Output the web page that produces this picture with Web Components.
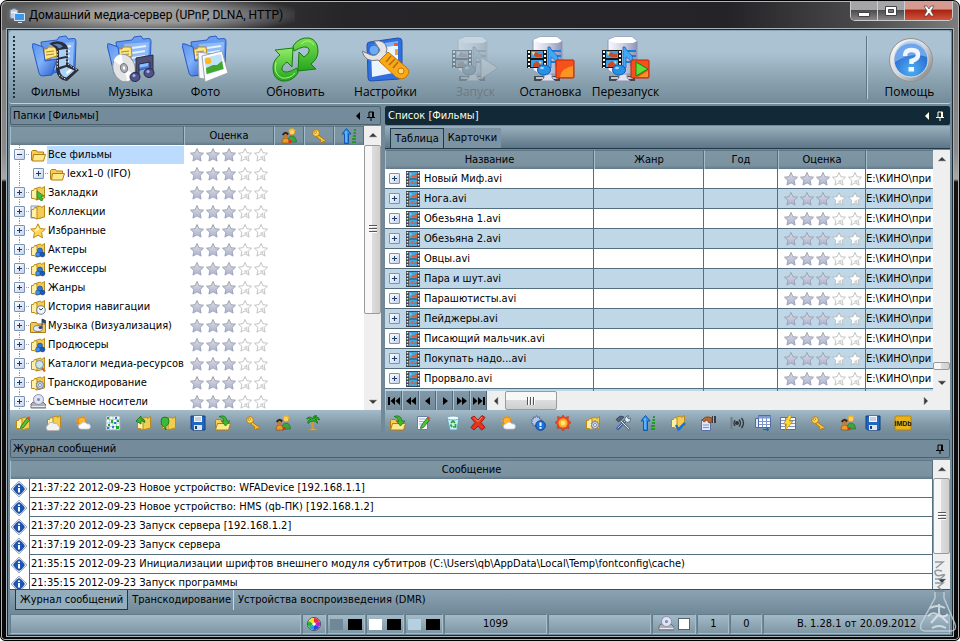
<!DOCTYPE html>
<html lang="ru">
<head>
<meta charset="utf-8">
<title>Домашний медиа-сервер (UPnP, DLNA, HTTP)</title>
<style>
html,body{margin:0;height:100%;overflow:hidden;background:#fff}
body{font:11px/14px "DejaVu Sans Condensed","DejaVu Sans",sans-serif;color:#000}
</style>
</head>
<body>
<media-window caption="Домашний медиа-сервер (UPnP, DLNA, HTTP)"></media-window>
<script>
const leaf = `<path d="M5.5 3.500l5-1.500 1 1.500 3-2v11.500l-8 2z" fill="#f3cd52" stroke="#b98a1b"/><path d="M1.500 5.500h2l1-2 2.500.500V15l-3-1.500H1.500z" fill="#fff0a8" stroke="#b98a1b"/>`;
const openFolder = `<path d="M1.500 13.500v-9l1-1h4l1 1.500h6v3" fill="#f5cf56" stroke="#b07d13"/><path d="M3.500 7.500h12l-2 6.500h-11z" fill="#ffe88a" stroke="#b07d13"/>`;
const folk = `<circle cx="10" cy="8.500" r="2.500" fill="#2a7be0" stroke="#123f90" stroke-width=".6"/><circle cx="8" cy="12.500" r="2.400" fill="#3f93f0" stroke="#123f90" stroke-width=".6"/><circle cx="12.500" cy="12.500" r="2.400" fill="#1658bd" stroke="#123f90" stroke-width=".6"/>`;
const gearPath = `M8 2l1 2 2-.700 0 2.100 2.200.600-1.200 1.800 1.500 1.700-2.200.800.100 2.200-2.100-.600L8 13.800l-1.300-1.900-2.100.600.100-2.200-2.200-.800L4 7.800 2.800 6l2.200-.600V3.300L7 4z`;
const note = `<path d="M2.500 1.500h10v13h-10z" fill="#f6f9ff" stroke="#6880a8"/><path d="M4 4h6M4 6.500h6M4 9h4" stroke="#9db0cf"/>`;
const pencil = `<path d="M6 11l6-8 2.500 2-6 7.500L5.500 13.500z" fill="#53c437" stroke="#256a18" stroke-width=".8"/><path d="M12 3l1.500-1.500 2 1.500-1.200 2z" fill="#e3493b"/>`;
const keyArt = `<g stroke="#b06f00" stroke-width=".8"><path d="M6.500 6.500l8 6-1 1.500-1.500-.800-1 1.800-1.600-1.100.600-1.700-4-3z" fill="#f9c63a"/><circle cx="5" cy="5" r="3.400" fill="#ffd75a"/><circle cx="4.300" cy="4.200" r="1.200" fill="#fff6c8"/></g>`;
const server = (extra) => `<defs><linearGradient id="sg"><stop stop-color="#fbfbff"/><stop offset=".5" stop-color="#cfd2e4"/><stop offset="1" stop-color="#8d93b8"/></linearGradient></defs>
<path d="M7 41h26v5H7z" fill="#42484e"/><path d="M9 42h7v2H9zM25 42h6v2h-6z" fill="#c3c8cc"/><path d="M17 36h8v7l3 3H14l3-3z" fill="#e0e3ee" stroke="#8d93b0"/>
<path d="M6 5l7-3h17l5 4v29l-6 4H12l-6-4z" fill="url(#sg)" stroke="#8f95b4"/><path d="M6 5l7 3h18l4-2-5-4H13z" fill="#fff"/><path d="M21 16h13M21 21h13M22 27h12" stroke="#1f79d6" stroke-width="2"/>
<path d="M0 15h20v18H0z" fill="#181818"/><path d="M4 16h12v7H4zM4 25h12v7H4z" fill="#3aa0e8"/><path d="M6 20l3-3 3 2 3 0v3H9zM6 29l4-3 4 4v2H6z" fill="#c94a28"/><path d="M5 17l3 0-2 4zM12 26l3 1-2 2z" fill="#f2d9a0"/><path d="M2 16v17M18 16v17" stroke="#fff" stroke-width="2" stroke-dasharray="2 2"/>
<path d="M23 12c2 6 8 6 8 13 0 3-2 4-2 6 1-7-4-8-5-9v11h-3V12z" fill="#40a8f6" stroke="#1664b4" stroke-width=".8"/><ellipse cx="17" cy="35" rx="6.500" ry="5" fill="#2492ea" stroke="#145ca8"/><ellipse cx="15" cy="33" rx="2" ry="1.200" fill="#9fd4fb"/>${extra}`;
const bigFolder = `<defs><linearGradient id="bf" x2="1" y2="1"><stop stop-color="#5791ee"/><stop offset=".45" stop-color="#83b3fa"/><stop offset="1" stop-color="#2458cb"/></linearGradient><linearGradient id="bb" x2="0" y2="1"><stop stop-color="#6ea2f3"/><stop offset="1" stop-color="#3a72dd"/></linearGradient></defs>
<path d="M9 7l16-2 2-3 7-1 2 3 6-.500q2 0 2 3l-1 26-31 8z" fill="url(#bb)" stroke="#2c5cc6"/>
<path d="M17 9l25-2-1 24-20 4z" fill="#8fbcf8"/><path d="M25 13l14-2M25 18l13-2M25 23l13-2M25 28l12-2" stroke="#e2f0ff" stroke-width="2"/>
<path d="M12 14h3l1-2h8l1 9-13 4z" fill="#ffe680" stroke="#b88a1b"/><path d="M14 17l8-1M14 20l8-1" stroke="#a98735"/>
<path d="M0 10q0-2 3-1l8 3 2 14 12-2-5 16-10 1q-2 0-3-3z" fill="url(#bf)" stroke="#2858c0"/>`;
const starPath = `M8 1.500l1.900 4.200 4.600.500-3.400 3.200 1 4.700L8 11.800l-4.100 2.300 1-4.700L1.500 6.200l4.600-.500z`;
const star16 = (on) => on
 ? `<path d="${starPath}" fill="url(#on)" stroke="#9ea3b6"/>`
 : `<path d="${starPath}" fill="#fff" stroke="#b4b4b4" stroke-width=".8"/><path d="M6.500 10.300l4.500-2-1 1.200.700 3L8 11z" fill="#d4d4d4"/>`;
const palette = `<circle cx="8" cy="8" r="7.500" fill="#eee" stroke="#445"/><path d="M8 8V1a7 7 0 0 1 6 3.500z" fill="#f02a2a"/><path d="M8 8l6-3.500a7 7 0 0 1 0 7z" fill="#c420c8"/><path d="M8 8l6 3.500A7 7 0 0 1 8 15z" fill="#2447e8"/><path d="M8 8v7a7 7 0 0 1-6-3.500z" fill="#18a8c8"/><path d="M8 8l-6 3.500a7 7 0 0 1 0-7z" fill="#26b62c"/><path d="M8 8L2 4.500A7 7 0 0 1 8 1z" fill="#f6dd1a"/><circle cx="8" cy="8" r="2" fill="#fff"/>`;
const turnArrow = `<path d="M3 15L21 13L20 32L15 27Q9 31 10 35Q13 40 25 33L26 38Q20 47 10 46Q1 44 1 33Q1 25 8 20z"/>`;

const ICONS = {
 app:[16,`<path d="M1 3q4-3 8 0v8q-4 2-8 0z" fill="#c3cede" stroke="#6c8098"/><path d="M2 5q3 1 6 0" stroke="#fff" fill="none"/><path d="M5.500 6.500h10v7h-10z" fill="#3d97e8" stroke="#cfe4f8"/><path d="M9 15.500h4" stroke="#dde"/>`],
 open:[16,openFolder],
 bookmark:[16,leaf+`<path d="M7 6l7 5-3 .500 2 3.500-2 1-2-3.500-2 2z" fill="#3cc038" stroke="#1b7e1b" stroke-width=".7"/>`],
 collection:[16,`<path d="M1 2h8l2 2v10H1z" fill="#e8edf5" stroke="#8b95a8"/>`+leaf],
 star:[16,`<path d="M8 .800l2.200 4.700 5.100.600-3.800 3.500 1 5.200L8 12.200l-4.500 2.600 1-5.200L.700 6.100l5.100-.600z" fill="#ffd654" stroke="#c08a16"/><path d="M8 3l1.500 3.500L5 9l.500-2.500z" fill="#fff3b8"/>`],
 folk:[16,leaf+folk],
 clock:[16,leaf+`<circle cx="11" cy="11" r="4.300" fill="#eef6ff" stroke="#6d7f95"/><path d="M9 9.500l2 1.500 2-2" stroke="#345" fill="none"/>`],
 music:[16,`<path d="M.500 14.500v-9l1-1h5l1 1.500h8v8.500z" fill="#f0ca55" stroke="#ab7b14"/><ellipse cx="8" cy="10.500" rx="4.500" ry="3" fill="#e5eaf6" stroke="#78829e"/><path d="M12 9V1l3.500 1.500v3L12.500 4" fill="#3a4470" stroke="#2a3158" stroke-width=".8"/><ellipse cx="10.500" cy="9.500" rx="2" ry="1.500" fill="#3a4470"/>`],
 search:[16,leaf+`<circle cx="9.500" cy="8.500" r="4" fill="#cbe8fb" fill-opacity=".9" stroke="#6f8fae"/><path d="M12 12l3 3.500" stroke="#d9582c" stroke-width="2"/>`],
 gear:[16,leaf+`<g transform="translate(4 4) scale(.75)"><path d="${gearPath}" fill="#c9d4e8" stroke="#66769a"/><circle cx="8" cy="8" r="2" fill="#fff" stroke="#66769a"/></g>`],
 disc:[16,`<path d="M1 10l2-2h10l3 3v3H1z" fill="#aeb2b8" stroke="#6d7177"/><path d="M1.500 12.500h14" stroke="#e9e9ee"/><ellipse cx="8.500" cy="5.500" rx="5" ry="5" fill="#dfe4f4" stroke="#8991aa"/><circle cx="8.500" cy="5.500" r="1.500" fill="#7b86b0"/>`],
 editfolder:[16,leaf+pencil],
 cloudfolder:[16,`<g transform="translate(1 -1)">${leaf}</g><path d="M3 15.500a3 3 0 0 1 0-5.500 3.500 3.500 0 0 1 6-1.500 3 3 0 0 1 4 2 2.600 2.600 0 0 1 0 5z" fill="#f2f2f2" stroke="#b4b4b4"/>`],
 weather:[16,`<circle cx="7" cy="6" r="4" fill="#ffb629" stroke="#ef7d0e"/><path d="M7 0v2M1 6h2M2.500 2l1.500 1.500M11.500 2L10 3.500M2 10l1.500-1" stroke="#f79a1c" stroke-width="1.500"/><path d="M6 14a2.500 2.500 0 0 1 0-5 3.500 3.500 0 0 1 6 0 2.500 2.500 0 0 1 1.500 5z" fill="#fafafa" stroke="#c5cad2" stroke-width=".7"/>`],
 grid:[16,`<path d="M1 1h14v14H1z" fill="#f4fbff" stroke="#93a9b8"/><path d="M1 4.500h14M1 8h14M1 11.500h14M4.500 1v14M8 1v14M11.500 1v14" stroke="#9fb8c6" stroke-width=".7"/><path d="M2 2h2v2H2zM6 5h2v3H6zM11 11h3v3h-3zM12 5h2v2h-2zM3 9h2v2H3z" fill="#25a533"/><path d="M10 2h2v2h-2zM2 12h2v2H2zM7 11h2v2H7zM9 7h2v2H9z" fill="#3179c8"/>`],
 backfolder:[16,`<g transform="translate(1 0)">${leaf}</g><path d="M1 6l5-5v2.500q4 0 4 4-2-2-4-1.500V9z" fill="#3fb52f" stroke="#1b6d17" stroke-width=".8"/>`],
 addfolder:[16,`<g transform="translate(1 0)">${leaf}</g><path d="M1 6q0-4 4-4t4 4-3 5v4l-2-3q-3-1-3-6z" fill="#3cba3a" stroke="#1b6d17" stroke-width=".8"/>`],
 save:[16,`<path d="M1 1h14v14H2.500L1 13.500z" fill="#2167c0" stroke="#123f82"/><path d="M4 1h8v6H4z" fill="#f4f7fc"/><path d="M5 3h6M5 5h6" stroke="#9aabc5"/><path d="M4 10h8v5H4z" fill="#dfe4ea"/><path d="M5 11h2v3H5z" fill="#123f82"/>`],
 load:[16,`<path d="M.500 14.500v-9l1-1h4l1 1.500h6v3" fill="#f5cf56" stroke="#b07d13"/><path d="M2.500 8.500h13l-2 6.500H.500z" fill="#ffe88a" stroke="#b07d13"/><path d="M4 1.500q7-2.500 8 4.500h3L10.500 11 6.500 6H9Q9 3 4 1.500z" fill="#3cb730" stroke="#17701a" stroke-width=".7"/>`],
 key:[16,keyArt],
 users:[16,`<path d="M7 14q0-6 4-6t4.500 6z" fill="#3ca63d" stroke="#23702a" stroke-width=".7"/><circle cx="11" cy="4" r="3" fill="#ffd06a" stroke="#c98722" stroke-width=".8"/><path d="M8 3q3-4 6 0" stroke="#efb823" stroke-width="1.500" fill="none"/><path d="M1 15q0-5 3.500-5T9 15z" fill="#ef9d22" stroke="#974d0c" stroke-width=".7"/><circle cx="4.500" cy="7.500" r="2.600" fill="#c47a3c"/><path d="M1.800 7q2-4 5.400-.500" stroke="#30241c" stroke-width="2" fill="none"/><path d="M7.500 12l3 0 0 3h-3z" fill="#d82f22"/>`],
 palm:[16,`<path d="M8 6q-1.500 4 0 8" stroke="#d29a2e" stroke-width="2.500" fill="none"/><path d="M8 4Q4 0 1.500 4 4 3 6 4.500 2 5 3 8.500 5 6 8 6q3 0 4.500 2.500.500-3-2.500-4 3-1 4.500.500Q14 1 9.500 3 10 1 12 1 8-.500 8 4z" fill="#35b02d" stroke="#18771b" stroke-width=".9"/><path d="M3 15q5-3 10 0z" fill="#f3cf6c" stroke="#b98a2c" stroke-width=".7"/>`],
 edit:[16,note+pencil],
 recycle:[16,`<path d="M2 3h12l-2 12H5z" fill="#c9ecf9" stroke="#5f9ec0"/><ellipse cx="8" cy="3" rx="6" ry="2" fill="#f5fdff" stroke="#76a9c5"/><path d="M6 8l2-2 2 2M10.500 9l0 3H8M7 12L5.500 9.500" stroke="#22a62c" stroke-width="1.700" fill="none"/>`],
 remove:[16,`<path d="M1 3l3-2 4 4 4-4.500 3 2-4 5 4 5-3.500 2.500L8 11l-4 4-3-2.500 4-5z" fill="#e8341d" stroke="#a8170c"/><path d="M4 2.500l4 4L12 2" stroke="#ff8b6c" fill="none"/>`],
 gearinfo:[16,`<path d="${gearPath}" transform="translate(-1.500 -1.500)" fill="#b6c8e4" stroke="#5f76a2"/><circle cx="10.500" cy="10.500" r="4.800" fill="#1e72dc" stroke="#0e3f96"/><path d="M10.500 7.500v3.500M10.500 12v1.700" stroke="#fff" stroke-width="2"/>`],
 burst:[16,`<path d="M8 0l2 2.500 3.500-1-.500 3.500L16 7.500 13.500 9.500l.500 4-3.500-.500L8 16l-2-3-4 .500.500-4L0 7.500 3 5l-.500-3.500L6 2.500z" fill="#f2471d" stroke="#c02808" stroke-width=".5"/><circle cx="8" cy="8" r="4.500" fill="#ffb32d"/><circle cx="8" cy="8" r="2.300" fill="#ffe67a"/>`],
 tools:[16,`<path d="M2 14.500L11 5" stroke="#3c5a96" stroke-width="3"/><path d="M2.500 13.500l8-8" stroke="#b4caec"/><path d="M9.500 5l1-3 3-1.500-1 2.500 1.500 1 2-1-1 3.500-3 1z" fill="#e8edf4" stroke="#4b5a74" stroke-width=".8"/><path d="M14.500 14.500L6 6" stroke="#5f6f88" stroke-width="2.600"/><path d="M14 14L6 6" stroke="#dfe6ef"/><path d="M1 4.500L5 1l4 1-5.500 5z" fill="#52637c" stroke="#28364c" stroke-width=".7"/>`],
 sort:[16,`<path d="M5.500.500L10 6H7.500v9.500h-4V6H1z" fill="#2f93ee" stroke="#0f58ac"/><path d="M5 3v11" stroke="#96cdfd"/><path d="M11 14h4M11 11h4M12 8h3M12.500 5H15M13 2h2" stroke="#24992a" stroke-width="2"/>`],
 check:[16,`<g transform="translate(0 -1)">${leaf}</g><path d="M6 10l2.500 4.500L15 8" stroke="#1b6fd6" stroke-width="2.500" fill="none"/>`],
 card:[16,`<path d="M1.500 4.500h9v11h-9z" fill="#dbe6fa" stroke="#5c70a8"/><path d="M3 10h6M3 12.500h6" stroke="#7c94cc"/><path d="M2 5q3-4 7-3l3 1v4L9 8 7 5 4 7z" fill="#b8662c" stroke="#6b3614" stroke-width=".7"/><path d="M12 1h4v7h-4z" fill="#3a3d42"/><path d="M13.500 1v7" stroke="#aaa"/>`],
 sound:[16,`<path d="M1.500 2v12" stroke="#6f7d88" stroke-width="2"/><circle cx="7" cy="8" r="2" fill="#333"/><path d="M9 4.500q3 3.500 0 7M11.500 3q4 5 0 10M5 5q-2 3 0 6" stroke="#30363c" stroke-width="1.300" fill="none"/>`],
 table:[16,`<path d="M3.500.500h12v12h-12z" fill="#fff" stroke="#4f6ba6"/><path d="M3.500 1h12v2.500h-12z" fill="#7e9bd6"/><path d="M7.500 1v11M11.500 1v11M4 6.500h11M4 9.500h11" stroke="#7d95c8"/><path d="M.500 3.500h3v9h-3z" fill="#dfe7f8" stroke="#4f6ba6"/><path d="M8 14.500h5M11 12.500l3 2-3 2" stroke="#1763c8" fill="none"/>`],
 tablebolt:[16,`<path d="M.500 2.500h15v12H.500z" fill="#f3f6fc" stroke="#5b6f9c"/><path d="M1 5.500h14M1 8.500h14M1 11.500h14M5.500 3v11" stroke="#7f90b4"/><path d="M9 0L3.500 9h3L5 15.500 13 6H9.500L12 0z" fill="#ffd935" stroke="#b07e0a" stroke-width=".7"/>`],
 imdb:[18,`<rect x="1" y="2" width="16" height="14" rx="1" fill="#e8b21a" stroke="#b98406"/><text x="9" y="12" font-family="Liberation Sans Narrow, Liberation Sans, sans-serif" font-weight="700" font-size="7" text-anchor="middle" fill="#111">IMDb</text>`],
 info:[16,`<path d="M8 0l8 8-8 8-8-8z" fill="#d8e2f1" stroke="#8c9cb8" stroke-width=".8"/><path d="M8 2.500q3 1 5.500 5.500Q11 12.500 8 13.500 5 12.500 2.500 8 5 3.500 8 2.500z" fill="#1c56b4" stroke="#0d3888" stroke-width=".6"/><path d="M8 4.500v1.500M8 7v4.500" stroke="#fff" stroke-width="2"/>`],
 film:[16,`<path d="M1 0h14v16H1z" fill="#3b434d"/><path d="M4 1h8v6.500H4zM4 8.500h8V15H4z" fill="#49a4dc"/><path d="M8 4l1.500.500L11 2l1 1v3.500H6zM5 12l3-2 1 2 3-1v2H8z" fill="#d4633a"/><path d="M5 2l2 1-2 2z" fill="#86cdf2"/><path d="M2.500 1v15M13.500 1v15" stroke="#eceff2" stroke-width="1.500" stroke-dasharray="1.500 1.500"/>`],
 palette:[16,palette],
 pin:[10,`<path d="M3 1h4.500v5M3 1v5M6.500 1v5M1 6.500h8M5 6.500V10" stroke="currentColor" fill="none"/>`],
 back:[8,`<path d="M6 0v8L2 4z" fill="currentColor"/>`],
 films:[48,bigFolder+`<path d="M17 9Q22 5 30 7Q37 9 36 18L36 28L47 35L35 46Q25 45 24 34L25 18Q25 12 17 9z" fill="#2c2d3a"/><path d="M21 9.500q7-2 10 2l-4 2q-2-3-6-4z" fill="#5c80b8"/><path d="M27 15l7-1v7l-7 1.500zM27 24.500l7-1.500v7l-7 2zM27.500 34.500l7-2.500 8 3.500-8 7q-6-1-7-8z" fill="#a9d2f7"/><path d="M25.300 16v18M35 14v15" stroke="#e4e6ee" stroke-dasharray="1.500 1.500"/><path d="M36 29l9 6M27 40l7 4.500" stroke="#e4e6ee" stroke-dasharray="1.500 1.500"/><path d="M34 37l4-3 2 1-5 5z" fill="#fff"/>`],
 sounds:[48,bigFolder+`<g transform="rotate(-15 17 33)"><ellipse cx="17" cy="33" rx="11" ry="14" fill="#e2e3e5" stroke="#95989e"/><path d="M17 33L9 23q4-5 9-4zM17 33l8 9q-3 4-8 5z" fill="#fff"/><ellipse cx="17" cy="33" rx="3.500" ry="4.500" fill="#a9adb8" stroke="#777"/><ellipse cx="17" cy="33" rx="1.200" ry="1.700" fill="#fff"/></g><path d="M29 41V23l17-3v18h-3V27l-11 2v12z" fill="#4e5175" stroke="#2a2c48"/><ellipse cx="28" cy="42" rx="5" ry="4.500" fill="#4e5488" stroke="#25284a"/><ellipse cx="42" cy="38" rx="5" ry="4.500" fill="#4e5488" stroke="#25284a"/><circle cx="27" cy="40.500" r="1.500" fill="#a8b2e8"/><circle cx="41" cy="36.500" r="1.500" fill="#a8b2e8"/>`],
 photos:[48,bigFolder+`<path d="M16 17l15 2-4 26-10-2z" fill="#f6f7fb" stroke="#9aa0b2"/><path d="M20 21l20-5 6 22-23 9z" fill="#fff" stroke="#9ba1b0"/><path d="M22 23l17-4 3 15-17 6z" fill="#bfe2fb"/><path d="M24 33l7-3 4 0 5-4 1.500 8-17 5z" fill="#43a62e"/><circle cx="26" cy="26" r="3.200" fill="#ffb81e"/>`],
 refresh:[48,`<defs><linearGradient id="g" x2="0" y2="1"><stop stop-color="#92ec63"/><stop offset="1" stop-color="#25a51d"/></linearGradient><linearGradient id="h" x2="0" y2="1"><stop stop-color="#25a51d"/><stop offset="1" stop-color="#7be052"/></linearGradient></defs><g stroke="#177c14" stroke-linejoin="round"><g fill="url(#g)">${turnArrow}</g><g fill="url(#h)" transform="rotate(180 23.500 24.500)">${turnArrow}</g><path d="M4 27q-3 12 6 16 8 1 13-5" fill="none" stroke="#a9f283"/><path d="M29 9q8-7 13 1" fill="none" stroke="#a9f283"/></g>`],
 settings:[48,`<path d="M5 10q0-3 3-3L36 3q4 0 4 3v34q0 3-3 4L9 46q-3 0-3-3z" fill="#2f6fe0" stroke="#2350b0"/><path d="M9 14l27-5v28L10 42z" fill="#eaf5ff"/><path d="M9 10l27-4v4L9 15z" fill="#7fb2fa"/><path d="M32 8h4v3h-4z" fill="#e66224"/><path d="M33 14h3v6h-3z" fill="#e8a838"/><circle cx="12" cy="15" r="5" fill="#6cabf5" stroke="#2860c0"/><path d="M18 15L12 6q11-2 13 8l-1 4 6 5-6 8-8-6Q3 28 0 16l9 4q6 2 9-5z" fill="#e4e4e6" stroke="#77787c"/><path d="M17 26l9-9 18 15q5 4 1 9t-11 1z" fill="#f8a915" stroke="#c77408"/><path d="M24 27l5-6M27 30l6-6M31 33l5-6" stroke="#b86a08" stroke-width="1.500"/><circle cx="39" cy="36" r="3" fill="#ffd676" stroke="#c77408"/>`],
 start:[48,server(`<path d="M29 22l17 11-17 11z" fill="#cfd8e0" stroke="#7c8790"/>`)],
 stop:[48,server(`<rect x="29" y="25" width="18" height="18" rx="1" fill="#f6501b" stroke="#c22208"/><path d="M33 42q1-9 13-11v11z" fill="#fb9423"/>`)],
 restart:[48,server(`<rect x="29" y="25" width="18" height="18" rx="1" fill="#f6501b" stroke="#c22208"/><path d="M36 42l10-6v6z" fill="#fb9423"/><path d="M34 27l12 7-12 7z" fill="#5de038" stroke="#1c7e18"/>`)],
 help:[48,`<defs><linearGradient id="r" x2="1" y2="1"><stop stop-color="#fff"/><stop offset=".5" stop-color="#d7d7d9"/><stop offset="1" stop-color="#777"/></linearGradient><radialGradient id="b" cx=".5" cy=".8"><stop stop-color="#4fb0f2"/><stop offset="1" stop-color="#3075d5"/></radialGradient></defs><circle cx="25" cy="25" r="21.500" fill="url(#r)" stroke="#8f9295"/><circle cx="25" cy="25" r="17" fill="url(#b)" stroke="#d3e4f2"/><path d="M9 22a16 16 0 0 1 32 0q-15-6-32 5z" fill="#9ac4f6" opacity=".6"/><path d="M19 21q0-6 6.500-6t6.500 5q0 4-6.500 6v3" fill="none" stroke="#f1f5fc" stroke-width="4.500"/><path d="M22.500 32h5.500v4.500h-5.500z" fill="#f1f5fc"/>`]
};

class UiBase extends HTMLElement {
  connectedCallback(){ if(!this.shadowRoot) this.attachShadow({mode:'open'}).innerHTML = this.render(); }
  render(){ return ''; }
  a(n,d=''){ return this.getAttribute(n) ?? d; }
}

customElements.define('ui-icon', class extends UiBase {
  render(){
    const [box,art] = ICONS[this.a('name')];
    const s = this.a('size', box);
    return `<style>:host{display:inline-block;flex:none;line-height:0}svg{display:block}</style><svg width="${s}" height="${s}" viewBox="0 0 ${box} ${box}" fill="none" aria-hidden="true">${art}</svg>`;
  }
});

customElements.define('star-rating', class extends UiBase {
  render(){
    const n = +this.a('value','3');
    return `<style>:host{display:block}svg{display:block;width:80px;height:16px}</style>
    <svg viewBox="0 0 80 16" role="img" aria-label="${n} из 5"><defs><linearGradient id="on" x2="0" y2="1"><stop stop-color="#e2e2e2"/><stop offset=".45" stop-color="#c9cbd6"/><stop offset="1" stop-color="#aab2e0"/></linearGradient></defs>
    ${[0,1,2,3,4].map(i=>`<g transform="translate(${i*16} 0)">${star16(i<n)}</g>`).join('')}</svg>`;
  }
});

customElements.define('tool-button', class extends UiBase {
  render(){
    return `<style>:host{display:block;width:75px;font:12px/16px "Open Sans","Noto Sans",sans-serif}
    button{all:unset;box-sizing:border-box;display:flex;flex-direction:column;align-items:center;gap:1px;width:100%;padding-top:4px;white-space:nowrap}
    button:disabled{color:#75797d}button:disabled ui-icon{opacity:.32;filter:grayscale(.8)}</style>
    <button type="button" ${this.hasAttribute('disabled')?'disabled':''}><ui-icon name="${this.a('icon')}"></ui-icon><span><slot></slot></span></button>`;
  }
});

customElements.define('main-toolbar', class extends UiBase {
  render(){
    return `<style>:host{display:flex;box-sizing:border-box;height:74px;padding:0 4px 0 2px;background:linear-gradient(#abc2d2 0,#abc2d2 30%,#8ba2b1 68%,#748b9a 100%);border-top:1px solid #8aa3b4;border-bottom:1px solid #b9d3e4;border-radius:3px}
    .grip{width:2px;margin:5px 3px 4px 2px;background:repeating-linear-gradient(#1d3444 0 2px,transparent 2px 4px)}
    .group{display:flex;margin-right:15px}
    .rule{width:1px;margin:5px 0 4px auto;background:#5f7888;border-right:1px solid #b9cddb}.end{margin:0;padding-left:4px}</style>
    <div class="grip"></div>
    <div class="group"><tool-button icon="films">Фильмы</tool-button><tool-button icon="sounds">Музыка</tool-button><tool-button icon="photos">Фото</tool-button></div>
    <div class="group"><tool-button icon="refresh">Обновить</tool-button></div>
    <div class="group"><tool-button icon="settings">Настройки</tool-button></div>
    <div class="group"><tool-button icon="start" disabled>Запуск</tool-button><tool-button icon="stop">Остановка</tool-button><tool-button icon="restart">Перезапуск</tool-button></div>
    <div class="rule"></div><div class="group end"><tool-button icon="help">Помощь</tool-button></div>`;
  }
});

customElements.define('panel-header', class extends UiBase {
  render(){
    return `<style>:host{display:flex;align-items:center;box-sizing:border-box;height:19px;padding:0 3px 0 2px;border:1px solid #4c5f6c;border-radius:2px;background:#738b9a}
    :host([active]){background:#122938;color:#fffce0;border-color:#122938}
    span{flex:1}button{all:unset;width:13px;display:flex;justify-content:center}</style>
    <span><slot></slot></span>${this.hasAttribute('nav')?'<button type="button" aria-label="Назад"><ui-icon name="back"></ui-icon></button>':''}<button type="button" aria-label="Закрепить"><ui-icon name="pin"></ui-icon></button>`;
  }
});

customElements.define('icon-strip', class extends UiBase {
  render(){
    return `<style>:host{display:flex;gap:5px;height:25px;align-items:center;background:linear-gradient(#a3bac9,#8097a6 60%,#6f8796);overflow:hidden}
    div{display:flex}button{all:unset;width:25px;height:25px;display:flex;align-items:center;justify-content:center}</style>
    ${this.a('icons').split('|').map(g=>`<div>${g.split(' ').map(n=>`<button type="button" aria-label="${n}"><ui-icon name="${n}"></ui-icon></button>`).join('')}</div>`).join('')}`;
  }
});

customElements.define('scroll-bar', class extends UiBase {
  render(){
    const [b,t,e] = this.a('parts').split(' ');
    const h = this.hasAttribute('horizontal');
    const tri = h ? ['M6 4v8L2 8z','M3 4v8l4-4z'] : ['M0 6l4-4 4 4z','M0 2h8L4 6z'];
    const svg = d => `<svg width="8" height="${h?16:8}" viewBox="0 0 8 ${h?16:8}"><path d="${d}" fill="#3c3c3c" stroke="#aaa" stroke-width=".6"/></svg>`;
    return `<style>:host{display:flex;flex-direction:${h?'row':'column'};background:#efefef;${h?'flex:1':'width:17px'}}
    button{all:unset;flex:0 0 17px;display:flex;align-items:center;justify-content:center}
    .track{flex:1;display:flex;flex-direction:inherit;min-height:0;min-width:0}
    .b{flex:${b} 0 0}.e{flex:${e} 0 0}
    .thumb{flex:${t} 0 0;box-sizing:border-box;border:1px solid #9a9a9a;border-radius:2px;background:linear-gradient(${h?'180deg':'90deg'},#f7f7f7 0 45%,#dcdcdc 50%,#cfcfcf);display:flex;align-items:center;justify-content:center;overflow:hidden}
    .thumb i{flex:none;width:8px;height:8px;background:repeating-linear-gradient(${h?'90deg':'180deg'},#555 0 1px,#fff 1px 2px,transparent 2px 3px)}</style>
    <button type="button" aria-label="Назад" tabindex="-1">${svg(tri[0])}</button><div class="track"><div class="b"></div><div class="thumb">${t>10?'<i></i>':''}</div><div class="e"></div></div><button type="button" aria-label="Вперёд" tabindex="-1">${svg(tri[1])}</button>`;
  }
});

const TABLE_CSS = `table{border-collapse:separate;border-spacing:0;table-layout:fixed;width:100%}
 th{box-sizing:border-box;height:19px;padding:0;font-weight:400;background:linear-gradient(#7e95a4,#7b92a1 80%,#63798a);border-left:1px solid #a5bccb;border-right:1px solid #566c7b;border-top:1px solid #5f7685}
 td{padding:0;white-space:nowrap;overflow:hidden}
 .box{all:unset;box-sizing:border-box;flex:none;width:11px;height:11px;border:1px solid #7b93b5;border-radius:1px;background:linear-gradient(135deg,#fff,#c5d3ea);position:relative}
 .box::before,.box.plus::after{content:"";position:absolute;background:#1c3c68;left:2px;top:4px;width:5px;height:1px}
 .box.plus::after{left:4px;top:2px;width:1px;height:5px}`;

customElements.define('folder-tree', class extends UiBase {
  render(){
    const rows = [['Все фильмы','open',0],['lexx1-0 (IFO)','open',1],['Закладки','bookmark'],['Коллекции','collection'],['Избранные','star'],['Актеры','folk'],['Режиссеры','folk'],['Жанры','folk'],['История навигации','clock'],['Музыка (Визуализация)','music'],['Продюсеры','folk'],['Каталоги медиа-ресурсов','search'],['Транскодирование','gear'],['Съемные носители','disc']];
    return `<style>:host{display:flex;overflow:hidden;background:#fff;min-height:0}
    ${TABLE_CSS}
    .view{flex:1;overflow:hidden}
    th ui-icon{display:block;width:16px;margin:auto}
    td{height:19px}
    .n{display:flex;align-items:center;height:19px;padding-left:4px;background:repeating-linear-gradient(#9a9a9a 0 1px,transparent 1px 2px) 9px 0/1px 100% no-repeat}
    .n i{width:5px;height:1px;background:repeating-linear-gradient(90deg,transparent 0 1px,#9a9a9a 1px 2px)}
    .n.sub{padding-left:23px}
    .n ui-icon{margin-right:1px}
    .t{flex:1;line-height:18px;padding-left:1px}
    .sel .t{background:#bbdcff}
    td+td{padding-left:5px}
    </style>
    <div class="view"><table><colgroup><col><col style="width:90px"><col style="width:30px"><col style="width:30px"><col style="width:30px"></colgroup>
    <thead><tr><th aria-label="Папка"></th><th>Оценка</th><th><ui-icon name="users"></ui-icon></th><th><ui-icon name="key"></ui-icon></th><th><ui-icon name="sort"></ui-icon></th></tr></thead>
    <tbody>${rows.map(([t,i,l],k)=>`<tr><td><div class="n ${l?'sub':''} ${k?'':'sel'}"><button type="button" aria-label="${k?'Развернуть':'Свернуть'}" class="box ${k?'plus':''}"></button><i></i><ui-icon name="${i}"></ui-icon><span class="t">${t}</span></div></td><td colspan="4"><star-rating value="3"></star-rating></td></tr>`).join('')}</tbody></table></div>
    <scroll-bar parts="2 168 80"></scroll-bar>`;
  }
});

customElements.define('media-list', class extends UiBase {
  render(){
    const rows = ['Новый Миф.avi','Нога.avi','Обезьяна 1.avi','Обезьяна 2.avi','Овцы.avi','Пара и шут.avi','Парашютисты.avi','Пейджеры.avi','Писающий мальчик.avi','Покупать надо...avi','Прорвало.avi',''];
    return `<style>:host{display:flex;overflow:hidden;background:#efefef;min-height:0}
    ${TABLE_CSS}
    .view{flex:1;min-width:0;overflow:hidden}
    td{box-sizing:border-box;height:20px;border-bottom:1px solid #536f80;border-right:1px solid #536f80;background:#fff}
    tr:nth-child(even) td{background:#bfd7e6}
    td:last-child,th:last-child{border-right:0}
    .n{display:flex;align-items:center;height:19px;padding-left:4px}
    .n ui-icon{margin:0 3px 0 5px}
    td:nth-child(4){padding-left:5px}</style>
    <div class="view"><table><colgroup><col><col style="width:110px"><col style="width:74px"><col style="width:88px"><col style="width:67px"></colgroup>
    <thead><tr><th>Название</th><th>Жанр</th><th>Год</th><th>Оценка</th><th aria-label="Путь"></th></tr></thead>
    <tbody>${rows.map(t=>t?`<tr><td><div class="n"><button type="button" class="box plus" aria-label="Развернуть"></button><ui-icon name="film"></ui-icon><span>${t}</span></div></td><td></td><td></td><td><star-rating value="3"></star-rating></td><td>E:\\КИНО\\при</td></tr>`:'<tr><td></td><td></td><td></td><td></td><td></td></tr>').join('')}</tbody></table></div>
    <scroll-bar parts="196 6 4"></scroll-bar>`;
  }
});

customElements.define('record-nav', class extends UiBase {
  render(){
    const icon = [
      `<path d="M0 0h2v8H0zM7 0v8L2.500 4zM12 0v8L7.500 4z"/>`,
      `<path d="M6 0v8L1 4zM11 0v8L6 4z"/>`,
      `<path d="M8 0v8L3 4z"/>`,
      `<path d="M4 0v8l5-4z"/>`,
      `<path d="M1 0v8l5-4zM6 0v8l5-4z"/>`,
      `<path d="M10 0h2v8h-2zM0 0v8l4.500-4zM5 0v8l4.500-4z"/>`];
    return `<style>:host{display:flex;height:19px;background:#efefef}
    button{all:unset;box-sizing:border-box;width:17px;display:flex;align-items:center;justify-content:center;background:linear-gradient(#8299a8,#72899a);border-left:1px solid #b0c6d4;border-right:1px solid #53697a}
    .corner{width:17px}</style>
    ${['В начало','Страница назад','Назад','Вперёд','Страница вперёд','В конец'].map((l,i)=>`<button type="button" aria-label="${l}"><svg width="12" height="8">${icon[i]}</svg></button>`).join('')}
    <scroll-bar horizontal parts="1 50 361"></scroll-bar><div class="corner"></div>`;
  }
});

customElements.define('tab-row', class extends UiBase {
  render(){
    const low = this.hasAttribute('bottom');
    return `<style>:host{display:flex;box-sizing:border-box;padding-left:5px;${low?'height:22px;align-items:flex-start;background:linear-gradient(#8ba3b3,#738b9a);border-top:1px solid #36505f':'height:23px;margin-bottom:1px;align-items:flex-end;background:linear-gradient(#9ab0be,#5d7587);border-bottom:1px solid #1f3949'}}
    [role=tablist]{display:flex}
    button{all:unset;box-sizing:border-box;height:20px;padding:0 4px;line-height:20px;white-space:nowrap}
    button+button{${low?'border-right:1px solid #c5d9e5;padding:0 2px 0 4px':'background:#7b93a2'}}
    button:last-child{border-right:0}
    [aria-selected=true]{border:1px solid #1f3949;${low?'background:#93adbd;border-top:0':'background:#7f97a6;border-bottom:0'}}</style>
    <div role="tablist">${this.a('tabs').split('|').map((t,i)=>`<button type="button" role="tab" aria-selected="${i===0}">${t}</button>`).join('')}</div>`;
  }
});

customElements.define('message-log', class extends UiBase {
  render(){
    const rows = ['21:37:22 2012-09-23 Новое устройство: WFADevice [192.168.1.1]','21:37:22 2012-09-23 Новое устройство: HMS (qb-ПК) [192.168.1.2]','21:37:20 2012-09-23 Запуск сервера [192.168.1.2]','21:37:19 2012-09-23 Запуск сервера','21:35:15 2012-09-23 Инициализации шрифтов внешнего модуля субтитров (C:\\Users\\qb\\AppData\\Local\\Temp\\fontconfig\\cache)','21:35:15 2012-09-23 Запуск программы'];
    return `<style>:host{display:flex;height:129px;overflow:hidden;background:#fff}
    ${TABLE_CSS}
    .view{flex:1;min-width:0;overflow:hidden}
    td{box-sizing:border-box;height:19px}
    td+td{border-left:1px solid #536f80;border-bottom:1px solid #536f80;border-right:1px solid #536f80;padding-left:1px}
    td ui-icon{display:block;margin-left:1px}</style>
    <div class="view"><table><colgroup><col style="width:19px"><col></colgroup><thead><tr><th colspan="2">Сообщение</th></tr></thead>
    <tbody>${rows.map(t=>`<tr><td><ui-icon name="info"></ui-icon></td><td>${t}</td></tr>`).join('')}</tbody></table></div>
    <scroll-bar parts="1 76 18"></scroll-bar>`;
  }
});

customElements.define('status-bar', class extends UiBase {
  render(){
    return `<style>:host{display:flex;gap:1px;height:20px}
    .c{box-sizing:border-box;display:flex;align-items:center;justify-content:center;border:1px solid #647b8a;border-right-color:#a6bdcb;border-bottom-color:#a6bdcb;background:linear-gradient(#a4bac8,#7f96a5)}
    .wide{flex:291 0 0}.blank{flex:102 0 0}.ver{flex:186 0 0}
    .num{width:103px}.s{width:32px}
    .sw{gap:5px;padding:0 2px;width:38px}.pal{width:24px}
    .sw button{all:unset;width:14px;height:11px}
    .dev{width:44px;gap:4px}
    input{appearance:none;margin:0;width:12px;height:12px;background:#fff;border:1px solid #55636c}</style>
    <div class="c wide"></div>
    <div class="c pal"><ui-icon name="palette" size="14"></ui-icon></div>
    ${['#6f8796','#ffffff','#b5d0e0'].map(c=>`<div class="c sw"><button type="button" aria-label="Фон" style="background:${c}"></button><button type="button" aria-label="Текст" style="background:#000"></button></div>`).join('')}
    <div class="c num">1099</div><div class="c blank"></div>
    <div class="c dev"><ui-icon name="disc"></ui-icon><input type="checkbox" aria-label="Съемный носитель"></div>
    <div class="c s">1</div><div class="c s">0</div><div class="c ver">В. 1.28.1 от 20.09.2012</div>`;
  }
});

customElements.define('flask-mark', class extends UiBase {
  render(){
    return `<style>:host{position:absolute;right:1px;bottom:6px;pointer-events:none;opacity:.8}svg{display:block}</style>
    <svg width="40" height="76" viewBox="0 0 40 76" fill="none" stroke="#b9c6ce" stroke-width="1.500"><path d="M17 34v6L3 66q-2 7 4 7h26q6 0 4-7L26 40v-6" stroke="#c9d6de"/><path d="M12 50q8-4 15 0M10 58q5-5 10-1t10-1M21 46v10l-8 9M21 56l9 9M14 70q7-4 14 0" stroke="#e2eaf0" stroke-width="2"/><path d="M17 4h8l-7 6M24 13q-8-2-7 2t7 2-2 4h-5M17 25h8l-5 4 5 4h-8" stroke="#77868f"/></svg>`;
  }
});

customElements.define('title-bar', class extends UiBase {
  render(){
    return `<style>:host{display:flex;height:28px;font:12px/16px Roboto,"Open Sans",sans-serif}
    .cap{display:flex;align-items:center;gap:4px;padding:0 12px 0 2px;background:radial-gradient(ellipse 54% 70% at 50% 50%,rgba(190,190,190,.72) 40%,transparent 100%)}
    .ctl{display:flex;margin-left:auto;height:19px;border:1px solid #ccc;border-top:0;border-radius:0 0 5px 5px;overflow:hidden}
    button{all:unset;box-sizing:border-box;width:27px;display:flex;align-items:center;justify-content:center;background:linear-gradient(#a5a5a7 0 45%,#4d4d50 50%,#858585);border-right:1px solid #d0d0d0}
    .x{width:47px;border:0;background:linear-gradient(#d69a90 0 42%,#a82410 48%,#d4513a)}</style>
    <div class="cap"><ui-icon name="app"></ui-icon><span>${this.a('caption')}</span></div>
    <div class="ctl"><button type="button" aria-label="Свернуть"><svg width="12" height="12"><path d="M.500 7.500h11v4H.500z" fill="#fff" stroke="#444"/></svg></button>
    <button type="button" aria-label="Развернуть"><svg width="12" height="12"><path d="M.500 1.500h11v9H.500z" fill="#fff" stroke="#444"/><path d="M3.500 4.500h5v3h-5z" fill="#777" stroke="#444"/></svg></button>
    <button type="button" class="x" aria-label="Закрыть"><svg width="12" height="12"><path d="M1 1h3l2 3 2-3h3L8 6l3 5H8L6 8l-2 3H1l3-5z" fill="#fff" stroke="#444" stroke-width=".7"/></svg></button></div>`;
  }
});

customElements.define('media-window', class extends UiBase {
  render(){
    return `<style>:host{display:flex;flex-direction:column;position:relative;box-sizing:border-box;height:100vh;padding:0 6px 4px;border:1px solid #000;border-radius:7px 7px 5px 5px;
      background:linear-gradient(90deg,#5c5c5c 0,#3c3c3e 18%,#262629 36%,#242428 76%,#4a4a4b 90%,#7d7d7d 100%) 0 0/100% 29px no-repeat,linear-gradient(#777 0,#8b8b8b 150px,#a8a8a8 178px,#141212 181px,#0a0909);
      box-shadow:inset 0 0 0 1px #b4b4b4}
    .client{flex:1;min-height:0;display:flex;flex-direction:column;box-sizing:border-box;padding:0 2px 1px;border:1px solid #1b2a33;background:#718a99;box-shadow:0 0 0 1px #a9b4ba}
    main-toolbar{margin:0 -1px}
    main{flex:1;min-height:0;display:grid;grid-template-columns:371fr 565fr;grid-template-rows:minmax(0,1fr);gap:4px;margin:2px 0 4px}
    section{display:flex;flex-direction:column;min-width:0;min-height:0}
    panel-header{margin-bottom:1px}
    .log panel-header{margin-bottom:2px}
    folder-tree,media-list{flex:1}
    footer{margin-top:3px}</style>
    <title-bar caption="${this.a('caption')}"></title-bar>
    <div class="client"><main-toolbar></main-toolbar>
    <main>
      <section><panel-header nav>Папки [Фильмы]</panel-header><folder-tree></folder-tree>
        <icon-strip icons="editfolder|cloudfolder|weather|grid|backfolder addfolder|save load|key|users|palm"></icon-strip></section>
      <section><panel-header nav active>Список [Фильмы]</panel-header><tab-row tabs="Таблица|Карточки"></tab-row><media-list></media-list><record-nav></record-nav>
        <icon-strip icons="load edit|recycle remove|weather|gearinfo burst|gear|tools sort|check|card|sound table tablebolt|key|users save|imdb"></icon-strip></section>
    </main>
    <section class="log"><panel-header>Журнал сообщений</panel-header><message-log></message-log><tab-row bottom tabs="Журнал сообщений|Транскодирование|Устройства воспроизведения (DMR)"></tab-row></section>
    <footer><status-bar></status-bar></footer></div>
    <flask-mark></flask-mark>`;
  }
});
</script>
</body>
</html>
